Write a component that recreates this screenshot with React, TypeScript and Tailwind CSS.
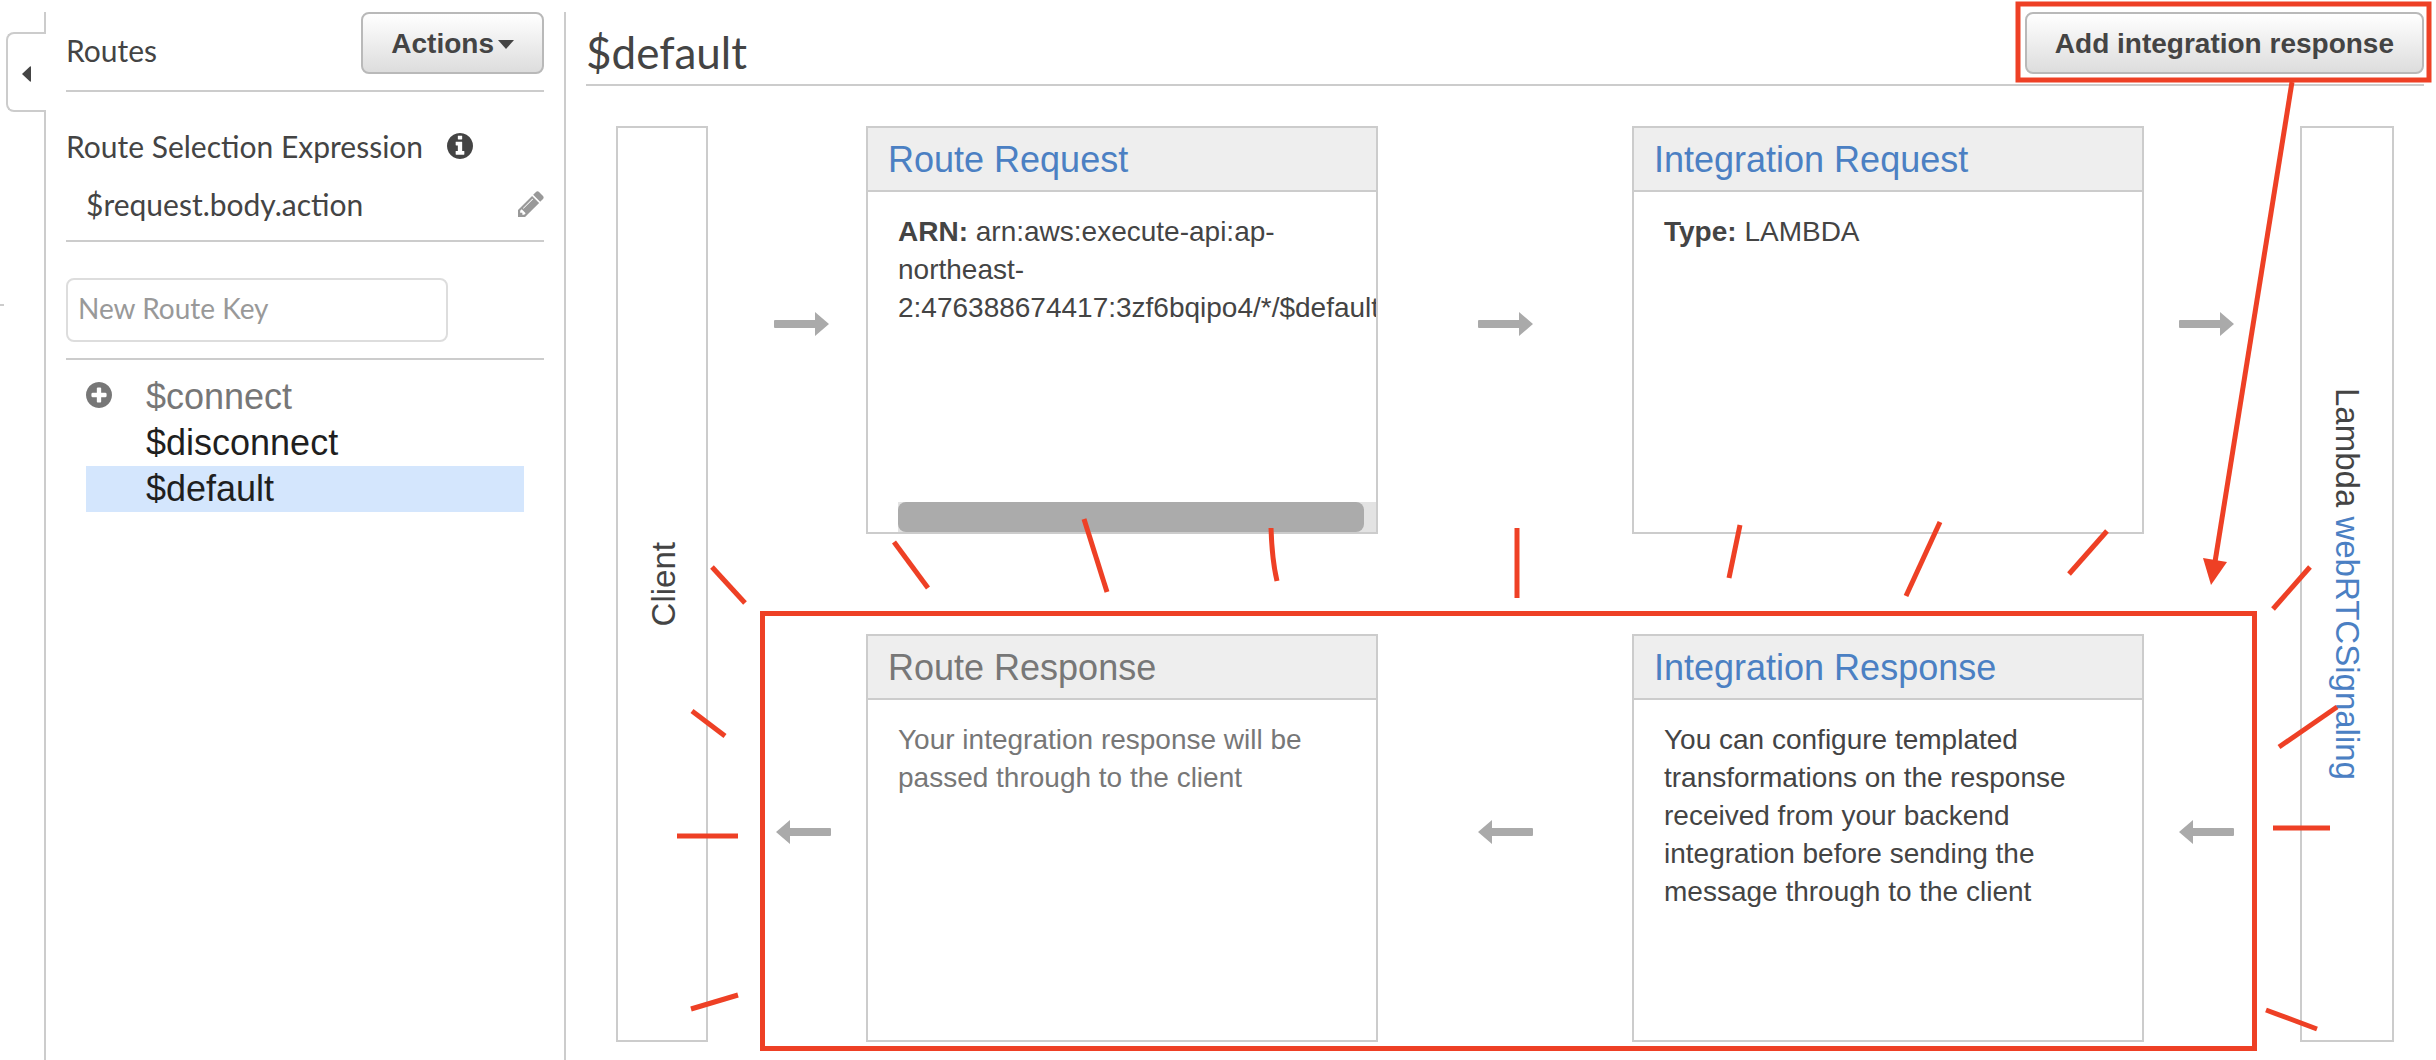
import React from "react";

const CIRCLE =
  "m320-64q0 209-103 385.5t-279.5 279.5-385.5 103-385.5-103-279.5-279.5-103-385.5 103-385.5 279.5-279.5 385.5-103 385.5 103 279.5 279.5 103 385.5z";
const INFO =
  "M1152 1376v-160q0-14-9-23t-23-9h-96v-512q0-14-9-23t-23-9h-320q-14 0-23 9t-9 23v160q0 14 9 23t23 9h96v320h-96q-14 0-23 9t-9 23v160q0 14 9 23t23 9h448q14 0 23-9t9-23zm-128-896v-160q0-14-9-23t-23-9h-192q-14 0-23 9t-9 23v160q0 14 9 23t23 9h192q14 0 23-9t9-23zm640 416q0 209-103 385.5t-279.5 279.5-385.5 103-385.5-103-279.5-279.5-103-385.5 103-385.5 279.5-279.5 385.5-103 385.5 103 279.5 279.5 103 385.5z";
const PLUS =
  "M1344 960v-128q0-26-19-45t-45-19h-256v-256q0-26-19-45t-45-19h-128q-26 0-45 19t-19 45v256h-256q-26 0-45 19t-19 45v128q0 26 19 45t45 19h256v256q0 26 19 45t45 19h128q26 0 45-19t19-45v-256h256q26 0 45-19t19-45z" +
  CIRCLE;
const PENCIL =
  "M491 1536l91-91-235-235-91 91v107h128v128h107zm523-928q0-22-22-22-10 0-17 7l-542 542q-7 7-7 17 0 22 22 22 10 0 17-7l542-542q7-7 7-17zm-54-192l416 416-832 832h-416v-416zm683 96q0 53-37 90l-166 166-416-416 166-165q36-38 90-38 53 0 91 38l235 234q37 39 37 91z";

function Icon({ d, className = "" }: { d: string; className?: string }) {
  return (
    <svg viewBox="128 128 1536 1536" fill="currentColor" aria-hidden="true" className={`size-[26px] shrink-0 ${className}`}>
      <path d={d} />
    </svg>
  );
}

function Button({ children }: { children: React.ReactNode }) {
  return (
    <button className="flex h-[62px] items-center gap-1 rounded-lg border-2 border-[#b9b9b9] bg-linear-to-b from-white to-[#dddddd] px-7 pt-0.5 font-['Liberation_Sans',sans-serif] text-[28px] font-bold whitespace-nowrap text-[#444444]">
      {children}
    </button>
  );
}

function Arrow({ left = false, className = "" }: { left?: boolean; className?: string }) {
  return (
    <div className={`flex items-center justify-center pb-3 ${className}`}>
      <svg viewBox="0 0 55 24" aria-hidden="true" className="h-6 w-[55px] fill-[#aaaaaa]">
        {left ? (
          <path d="M0 12 14 0V8H54a1 1 0 0 1 1 1V15a1 1 0 0 1-1 1H14V24z" />
        ) : (
          <path d="M55 12 41 0V8H1a1 1 0 0 0-1 1V15a1 1 0 0 0 1 1H41V24z" />
        )}
      </svg>
    </div>
  );
}

function Card({
  title,
  muted = false,
  scroll = false,
  children,
}: {
  title: string;
  muted?: boolean;
  scroll?: boolean;
  children: React.ReactNode;
}) {
  return (
    <section className="flex min-h-[408px] min-w-0 flex-col overflow-hidden border-2 border-[#cccccc]">
      <h2 className="border-b-2 border-[#cccccc] bg-[#eeeeee] px-5 pt-0.5 text-4xl/[60px]">
        {muted ? (
          <span className="text-[#777777]">{title}</span>
        ) : (
          <a href="#" className="text-[#4b80c3]">
            {title}
          </a>
        )}
      </h2>
      <div className={`flex flex-1 flex-col pt-[21px] pl-[30px] text-[28px]/[38px] ${muted ? "text-[#777777]" : "text-[#444444]"}`}>
        <p className={scroll ? "" : "pr-10"}>{children}</p>
        {scroll && (
          <div className="mt-auto h-[30px] bg-[#e3e3e3] pr-3">
            <div className="h-full rounded-lg bg-[#ababab]" />
          </div>
        )}
      </div>
    </section>
  );
}

const ROUTES = [
  { name: "$connect", color: "text-[#777777]", add: true },
  { name: "$disconnect", color: "text-[#1f1f1f]" },
  { name: "$default", color: "bg-[#d4e6fd] text-[#1f1f1f]" },
];

const MARKS = [
  "M712 567 745 603",
  "M894 542 928 588",
  "M1084 519 1107 592",
  "M1271 528Q1272 560 1277 581",
  "M1517 528V598",
  "M1740 525 1729 578",
  "M1940 522 1906 596",
  "M2107 531 2069 574",
  "M2310 567 2273 609",
  "M2337 707 2279 747",
  "M2273 828H2330",
  "M2266 1010 2317 1029",
  "M692 711 725 736",
  "M677 836H738",
  "M691 1009 738 995",
];

function Annotations() {
  return (
    <svg
      viewBox="0 0 2436 1060"
      aria-hidden="true"
      className="pointer-events-none absolute inset-x-0 top-0 w-full fill-none stroke-[#ee4025] stroke-[5px]"
    >
      <rect x="2018" y="4" width="411" height="76" />
      <rect x="762.5" y="613.5" width="1492" height="435" />
      {MARKS.map((d) => (
        <path key={d} d={d} />
      ))}
      <path d="M2292 82 2215 562" />
      <path d="M2203 558 2227 562 2211 585z" className="fill-[#ee4025] stroke-none" />
    </svg>
  );
}

export default function App() {
  return (
    <div className="relative flex min-h-screen overflow-hidden bg-white pt-3 font-['Liberation_Sans',sans-serif] text-[#444444]">
      <div className="flex w-[46px] shrink-0 flex-col">
        <div className="h-5 border-r-2 border-[#cccccc]" />
        <button
          aria-label="Collapse panel"
          className="flex h-20 w-10 items-center self-end rounded-l-lg border-y-2 border-l-2 border-[#cccccc] pt-1 pl-3.5"
        >
          <svg viewBox="0 0 9 16" aria-hidden="true" className="h-4 w-[9px] fill-[#444444]">
            <path d="M0 8 8 0.5Q9 0 9 1V15Q9 16 8 15.5z" />
          </svg>
        </button>
        <div className="flex-1 border-r-2 border-[#cccccc] pt-48">
          <hr className="w-1 border-t-2 border-[#cccccc]" />
        </div>
      </div>

      <aside className="w-[520px] shrink-0 border-r-2 border-[#cccccc] px-5 font-[Lato,sans-serif]">
        <div className="flex h-20 items-start justify-between border-b-2 border-[#cccccc]">
          <h2 className="mt-[18px] text-3xl/10">Routes</h2>
          <Button>
            Actions
            <svg viewBox="0 0 16 9" aria-hidden="true" className="h-[9px] w-4 fill-[#444444]">
              <path d="M0 0H16L8 9z" />
            </svg>
          </Button>
        </div>

        <div className="border-b-2 border-[#cccccc] pt-[34px] pb-4 text-3xl/10">
          <div className="flex items-center gap-6">
            <h3>Route Selection Expression</h3>
            <Icon d={INFO} />
          </div>
          <div className="mt-[18px] flex items-center justify-between pl-5">
            <span>$request.body.action</span>
            <button aria-label="Edit expression">
              <Icon d={PENCIL} className="text-[#999999]" />
            </button>
          </div>
        </div>

        <div className="border-b-2 border-[#cccccc] pt-9 pb-4">
          <input
            type="text"
            aria-label="New Route Key"
            placeholder="New Route Key"
            className="block h-16 w-4/5 rounded-lg border-2 border-[#dddddd] px-2.5 pb-1 text-[28px] placeholder:text-[#999999]"
          />
        </div>

        <ul className="mx-5 pt-3.5 font-['Liberation_Sans',sans-serif] text-4xl/[46px]">
          {ROUTES.map((r) => (
            <li key={r.name} className={`flex h-[46px] ${r.color}`}>
              <span className="w-[60px] pt-2">{r.add && <Icon d={PLUS} />}</span>
              <a href="#">{r.name}</a>
            </li>
          ))}
        </ul>
      </aside>

      <main className="min-w-0 flex-1 pr-3 pl-5">
        <header className="flex h-[74px] items-start justify-between border-b-2 border-[#cccccc]">
          <h1 className="mt-3.5 font-[Lato,sans-serif] text-[44px]/[52px]">$default</h1>
          <Button>Add integration response</Button>
        </header>

        <div className="mx-[30px] mt-10 grid grid-cols-[92px_158fr_512fr_254fr_512fr_156fr_94px] grid-rows-[auto_auto] gap-y-[100px]">
          <div className="row-span-2 flex items-center justify-center border-2 border-[#cccccc] pl-1">
            <span className="rotate-180 text-[33px]/10 [writing-mode:vertical-rl]">Client</span>
          </div>
          <Arrow className="pl-7" />
          <Card title="Route Request" scroll>
            <b>ARN:</b> arn:aws:execute-api:ap-northeast-2:476388674417:3zf6bqipo4/*/$default
          </Card>
          <Arrow />
          <Card title="Integration Request">
            <b>Type:</b> LAMBDA
          </Card>
          <Arrow className="pr-8" />
          <div className="row-span-2 flex items-center justify-center border-2 border-[#cccccc]">
            <span className="text-[33px]/10 [writing-mode:vertical-rl]">
              Lambda{" "}
              <a href="#" className="text-[#4b80c3]">
                webRTCSignaling
              </a>
            </span>
          </div>
          <Arrow left className="pl-8" />
          <Card title="Route Response" muted>
            Your integration response will be passed through to the client
          </Card>
          <Arrow left />
          <Card title="Integration Response">
            You can configure templated transformations on the response received from your backend integration before sending
            the message through to the client
          </Card>
          <Arrow left className="pr-8" />
        </div>
      </main>

      <Annotations />
    </div>
  );
}
